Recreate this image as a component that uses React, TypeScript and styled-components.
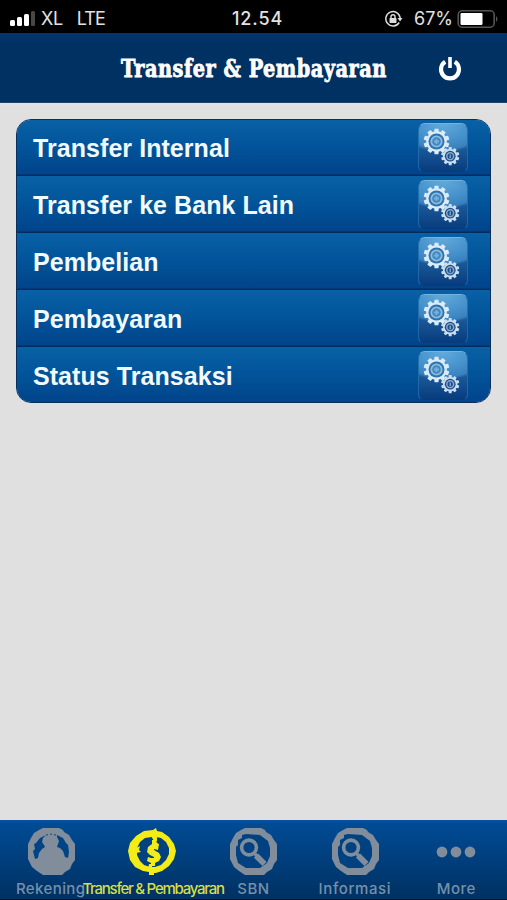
import React from "react";
import styled, { createGlobalStyle } from "styled-components";

const GlobalStyle = createGlobalStyle`
  * { box-sizing: border-box; }
  body { margin: 0; background: #e0e0e1; }
`;

const Screen = styled.div`
  display: flex;
  flex-direction: column;
  width: 507px;
  height: 900px;
  overflow: hidden;
  background: #e0e0e1;
  font-family: "Liberation Sans", Arial, sans-serif;
`;

const StatusBar = styled.div`
  display: grid;
  grid-template-columns: 1fr auto 1fr;
  align-items: center;
  height: 33px;
  flex: none;
  padding: 4px 8px 0 9px;
  background: #000;
  color: #e2e2e2;
  font-family: Inter, "Liberation Sans", sans-serif;
  font-size: 18px;
  line-height: 30px;
`;

const Carrier = styled.div`
  display: flex;
  align-items: center;
`;

const CarrierName = styled.span<{ $gap: number; $tracking: number }>`
  margin-left: ${(p) => p.$gap}px;
  letter-spacing: ${(p) => p.$tracking}px;
`;

const Clock = styled.div`
  margin-left: 7px;
  font-weight: 500;
  letter-spacing: 0.9px;
`;

const Power = styled.div`
  display: flex;
  align-items: center;
  justify-content: flex-end;
`;

const Percent = styled.span`
  margin: 0 4px 0 10px;
`;

const Header = styled.header`
  display: grid;
  grid-template-columns: 1fr 266px 1fr;
  align-items: center;
  height: 70px;
  flex: none;
  background: linear-gradient(#003570, #003163 12px, #003163);
  border-bottom: 1px solid #24436b;
`;

const Title = styled.h1`
  grid-column: 2;
  margin: 2px 0 0;
  width: 266px;
  white-space: nowrap;
  color: #fff;
  font: bold 25px/34px "DejaVu Serif Condensed", "DejaVu Serif", serif;
  font-stretch: condensed;
  -webkit-text-stroke: 0.8px #fff;
  letter-spacing: 0.6px;
  transform: scaleX(0.858);
  transform-origin: left center;
`;

const LogoutButton = styled.button`
  display: flex;
  justify-self: start;
  margin: 2px 0 0 51px;
  padding: 0;
  border: 0;
  background: none;
`;

const Content = styled.main`
  flex: 1;
  padding: 16px 16px 0 16px;
  background: linear-gradient(#dfe3e8, #e0e0e1 5px, #e0e0e1);
`;

const Menu = styled.ul`
  margin: 0;
  padding: 0;
  list-style: none;
  width: 475px;
  height: 284px;
  overflow: hidden;
  border: 1px solid #092f5c;
  border-radius: 15px;
`;

const MenuRow = styled.li`
  display: flex;
  align-items: center;
  justify-content: space-between;
  height: 57px;
  padding: 1px 22px 0 16px;
  border-bottom: 1px solid #022c60;
  box-shadow: inset 0 -1px #033875;
  background: linear-gradient(#0961a5, #02559b 45%, #01438a);
  &:first-child { height: 56px; }
  &:last-child { border-bottom: 0; height: 56px; }
`;

const MenuLabel = styled.span`
  color: #f1faff;
  font-size: 25px;
  font-weight: bold;
  line-height: 32px;
  letter-spacing: 0.06px;
`;

const GearTile = styled.span`
  display: flex;
  width: 50px;
  height: 50px;
  border-radius: 7px;
  border: 1px solid rgba(91, 157, 209, 0.35);
  border-top-color: #74b5df;
  border-bottom-color: transparent;
  background: radial-gradient(ellipse 46px 28px at 50% 0, #62aadb 0, #438fca 65%, #3a81bd 90%, rgba(20, 79, 146, 0) 100%),
    linear-gradient(#357bb7, #195696 55%, #073b7c);
  background-clip: padding-box;
`;

const TabBar = styled.nav`
  display: grid;
  grid-template-columns: repeat(5, 1fr);
  height: 80px;
  flex: none;
  background: linear-gradient(#0455a0, #004b94 4px, #003264 76px);
  border-bottom: 1px solid #00142b;
`;

const Tab = styled.div<{ $active?: boolean }>`
  display: flex;
  flex-direction: column;
  align-items: center;
  min-width: 0;
  padding-top: 7px;
  color: ${(p) => (p.$active ? "#f3ec16" : "#818d9a")};
`;

const TabLabel = styled.span<{ $tracking: number; $tight?: boolean }>`
  margin: 3px 0 0 ${(p) => (p.$tight ? 2 : 0)}px;
  white-space: nowrap;
  font: 500 15px/18px Inter, "Liberation Sans", sans-serif;
  letter-spacing: ${(p) => p.$tracking}px;
  color: ${(p) => (p.$tight ? "#d5df42" : "#7590aa")};
`;

function Signal() {
  return (
    <svg width="27" height="18" viewBox="0 0 27 18">
      <rect x="1" y="10" width="5" height="6" rx="1.5" fill="#fff" />
      <rect x="8" y="7" width="5" height="9" rx="1.5" fill="#fff" />
      <rect x="15" y="4" width="5" height="12" rx="1.5" fill="#fff" />
      <rect x="22" y="1" width="4" height="15" rx="1.5" fill="#484848" />
    </svg>
  );
}

function RotationLock() {
  return (
    <svg width="20" height="18" viewBox="0 0 20 18" fill="none" stroke="#ddd">
      <path d="M15.2 12.5A7.2 7.2 0 1 1 16.2 8" strokeWidth="1.5" />
      <path d="M13.5 8h5l-2.5 3.5z" fill="#ddd" stroke="none" />
      <rect x="5.5" y="8" width="7" height="5" rx=".7" fill="#ddd" stroke="none" />
      <path d="M7 8V6.7a2 2 0 0 1 4 0V8" strokeWidth="1.4" />
    </svg>
  );
}

function Battery() {
  return (
    <svg width="42" height="19" viewBox="0 0 42 19">
      <rect x="1.2" y=".8" width="36" height="16.4" rx="4" fill="none" stroke="#555" strokeWidth="1.6" />
      <rect x="3.5" y="3" width="22" height="12" rx="1.2" fill="#fff" />
      <path d="M39 6q3 3 0 6z" fill="#555" />
    </svg>
  );
}

function PowerIcon() {
  return (
    <svg width="24" height="26" viewBox="0 0 24 26" fill="none" stroke="#fff">
      <path d="M7.2 5.8a9 9 0 1 0 9.6 0" strokeWidth="4.2" />
      <path d="M12 1v11" strokeWidth="3.6" />
    </svg>
  );
}

function gearPath(cx: number, cy: number, outer: number, inner: number, teeth: number) {
  const points: string[] = [];
  for (let i = 0; i < teeth; i++) {
    const mid = (i / teeth) * Math.PI * 2;
    const step = (Math.PI * 2) / teeth;
    [
      [-0.36, inner],
      [-0.24, outer],
      [0.24, outer],
      [0.36, inner],
    ].forEach(([t, r]) => {
      const a = mid + t * step;
      points.push(`${(cx + Math.sin(a) * r).toFixed(2)} ${(cy - Math.cos(a) * r).toFixed(2)}`);
    });
  }
  return `M${points.join("L")}Z`;
}

function Gears() {
  return (
    <svg width="48" height="48" viewBox="0 0 48 48">
      <path d={gearPath(17.5, 17.5, 13, 10.3, 10)} fill="#d9ebf6" />
      <circle cx="17.5" cy="17.5" r="8" fill="#2f72ae" />
      <circle cx="17.5" cy="17.5" r="5.2" fill="#4188c0" stroke="#8abbe0" strokeWidth="1.8" />
      <path d="M17.5 15v5M15 17.5h5" stroke="#77b1d9" strokeWidth="1.8" />
      <path d={gearPath(31.2, 32.2, 9.2, 7.2, 10)} fill="#cbdeee" />
      <circle cx="31.2" cy="32.2" r="5.4" fill="#1b4c88" />
      <circle cx="31.2" cy="32.2" r="3.4" fill="none" stroke="#86a9cc" strokeWidth="1.5" />
      <path d="M31.2 30.5v3.4" stroke="#86a9cc" strokeWidth="1.4" />
    </svg>
  );
}

const octagon = "M17 1h16l4 2 1 2 5 3 3 5 3 4v16l-3 4-2 5-5 3-3 3H17l-6-4-5-4-3-6-1-2V17l3-6 3-5 5-3z";

function AccountIcon() {
  return (
    <svg width="50" height="50" viewBox="0 0 50 50">
      <path d={octagon} fill="currentColor" />
      <path d="M20 8l-6 3-4 5-2 1 1 5-2 2 2 8 3-1 1-5 3-4 3-2-1-2-2-3 1-4zM31 8l6 3 3 5 2 2 1 7-1 6-3-1-2-6-3-3-3-1 1-3 1-3-2-4z" fill="#004487" />
      <path d="M20 7h2v1.5h-2zM24 6.5h2V8h-2zM28 7h2v1.5h-2z" fill="#365f88" />
    </svg>
  );
}

function DollarIcon() {
  return (
    <svg width="50" height="50" viewBox="0 0 50 50">
      <path d="M26 3l3-2 1 3 5 1 7 5 5 7 2 7-2 8-5 7-7 5-6 2h-2v2h-5v-3l-6-1-8-4-5-7-2-9 2-8 6-7 8-5z" fill="currentColor" />
      <path d="M25 10l-7 1-5 4-3 6v7l3 6 4 4 6 2h5l6-2 5-5 3-6v-6l-3-6-5-4-5-1z" fill="#004180" />
      <path d="M24 9h6v5h-3zM21 42l1-5h3v5zM9 21l4-2-1 4 2 2-5 1z" fill="currentColor" />
      <path d="M32 17l-2-1-1-3h-4v4l-4 3-1 5 3 3 4 2v1h-3l-3-1-1 4 4 2v3h4v-3l4-2 2-4-2-4-5-3v-1l4 1z" fill="currentColor" />
    </svg>
  );
}

function SearchIcon() {
  return (
    <svg width="50" height="50" viewBox="0 0 50 50">
      <path d={octagon} fill="currentColor" />
      <path d="M18 7l14 1 8 6 2 7v8l-3 7-7 5H18l-8-5-2-8v-8l2-2v-5l4-2v-3z" fill="#004281" />
      <circle cx="21" cy="20.5" r="7.4" fill="none" stroke="currentColor" strokeWidth="3.6" />
      <path d="M26 26l3 3" stroke="currentColor" strokeWidth="3.2" />
      <path d="M28 28.5l8.5 8.5" stroke="currentColor" strokeWidth="6" />
    </svg>
  );
}

function MoreIcon() {
  return (
    <svg width="50" height="50" viewBox="0 0 50 50" fill="currentColor">
      <circle cx="11" cy="25" r="5.4" />
      <circle cx="25" cy="25" r="5.4" />
      <circle cx="39" cy="25" r="5.4" />
    </svg>
  );
}

const menuItems = ["Transfer Internal", "Transfer ke Bank Lain", "Pembelian", "Pembayaran", "Status Transaksi"];

const tabs = [
  { label: "Rekening", Icon: AccountIcon, tracking: 0.4 },
  { label: "Transfer & Pembayaran", Icon: DollarIcon, tracking: -1.25, active: true },
  { label: "SBN", Icon: SearchIcon, tracking: 0.5 },
  { label: "Informasi", Icon: SearchIcon, tracking: 0.6 },
  { label: "More", Icon: MoreIcon, tracking: 0.5 },
];

export default function App() {
  return (
    <Screen>
      <GlobalStyle />
      <StatusBar>
        <Carrier>
          <Signal />
          <CarrierName $gap={5} $tracking={-0.4}>XL</CarrierName>
          <CarrierName $gap={14} $tracking={-0.9}>LTE</CarrierName>
        </Carrier>
        <Clock>12.54</Clock>
        <Power>
          <RotationLock />
          <Percent>67%</Percent>
          <Battery />
        </Power>
      </StatusBar>
      <Header>
        <Title>Transfer &amp; Pembayaran</Title>
        <LogoutButton aria-label="Logout">
          <PowerIcon />
        </LogoutButton>
      </Header>
      <Content>
        <Menu>
          {menuItems.map((item) => (
            <MenuRow key={item}>
              <MenuLabel>{item}</MenuLabel>
              <GearTile>
                <Gears />
              </GearTile>
            </MenuRow>
          ))}
        </Menu>
      </Content>
      <TabBar>
        {tabs.map(({ label, Icon, tracking, active }) => (
          <Tab key={label} $active={active}>
            <Icon />
            <TabLabel $tracking={tracking} $tight={active}>{label}</TabLabel>
          </Tab>
        ))}
      </TabBar>
    </Screen>
  );
}
